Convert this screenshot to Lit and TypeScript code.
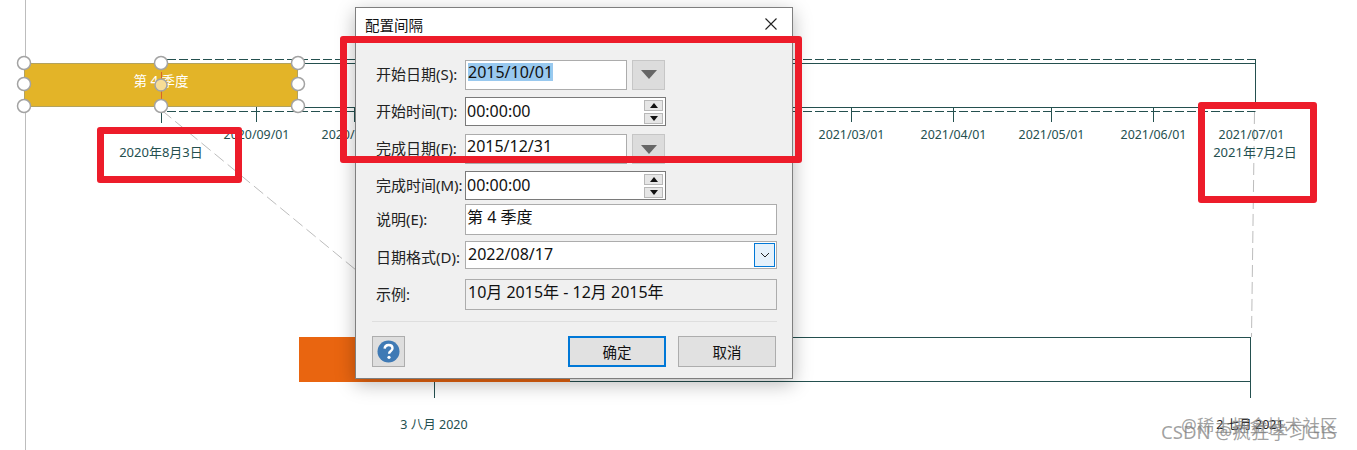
import { LitElement, html, css, svg } from "lit";
import { customElement } from "lit/decorators.js";

const TICKS: [number, string][] = [
  [256.5, "2020/09/01"],
  [354.5, "2020/10/01"],
  [851.5, "2021/03/01"],
  [953.5, "2021/04/01"],
  [1051.5, "2021/05/01"],
  [1153.5, "2021/06/01"],
  [1251.5, "2021/07/01"],
];
const DATES: [number, number, string][] = [
  [161, 144, "2020年8月3日"],
  [1255, 144, "2021年7月2日"],
];
const HANDLES: [number, number][] = [
  [24, 63], [161, 63], [298, 63],
  [24, 84], [298, 84],
  [24, 106], [161, 106], [298, 106],
];
const ANNS: [number, number, number, number][] = [
  [97, 127, 145, 56],
  [340, 36, 462, 127],
  [1198, 102, 119, 101],
];

const Down = () => html`<svg class="tri" viewBox="0 0 16 9"><path d="M0 0h16L8 9z" fill="#666"/></svg>`;
const Spin = () => html`<span class="spin">
  <span class="sb"><svg viewBox="0 0 8 5" width="8" height="5"><path d="M0 5h8L4 0z" fill="#111"/></svg></span>
  <span class="sb"><svg viewBox="0 0 8 5" width="8" height="5"><path d="M0 0h8L4 5z" fill="#111"/></svg></span>
</span>`;

@customElement("app-root")
export class AppRoot extends LitElement {
  static styles = css`
    :host { display: block; width: 1357px; height: 450px; position: relative; overflow: hidden; background: #fff; font-family: "Noto Sans", "Noto Sans CJK SC", sans-serif; }
    .canvas { position: absolute; inset: 0; }
    .layer { position: absolute; left: 0; top: 0; }
    .lab { position: absolute; font-size: 12.4px; line-height: 16px; color: #24504f; transform: translateX(-50%); white-space: nowrap; }
    .big { font-size: 13px; }
    .lab-mid { position: absolute; left: 434px; top: 417px; font-size: 12.5px; line-height: 16px; color: #24504f; transform: translateX(-50%); white-space: nowrap; }
    .lab-end { position: absolute; left: 1250px; top: 417px; font-size: 12.5px; line-height: 16px; color: #222; transform: translateX(-50%); white-space: nowrap; }
    .bar-y { position: absolute; left: 24px; top: 63px; width: 274px; height: 44px; box-sizing: border-box; background: #e3b428; border: 1px solid #b3a25e; color: #fff; font-size: 13.5px; display: flex; justify-content: center; padding-top: 7px; line-height: 20px; }
    .bar-o { position: absolute; left: 299px; top: 337px; width: 271px; height: 45px; background: #e96510; }
    .mark { position: absolute; font-size: 17.6px; line-height: 20px; color: rgba(125,125,125,.72); white-space: nowrap; }
    .m1 { left: 1181px; top: 415px; }
    .m2 { left: 1161px; top: 422px; font-size: 18.6px; }
    .ann { position: absolute; box-sizing: border-box; border: 7px solid #ed1c2a; border-radius: 3px; }

    .dlg { position: absolute; left: 355px; top: 7px; width: 438px; height: 372px; box-sizing: border-box; background: #f0f0f0; border: 1px solid #7f7f7f; box-shadow: 0 5px 18px rgba(0,0,0,.28); color: #111; display: flex; flex-direction: column; }
    .title { height: 34px; background: #fff; display: flex; align-items: center; justify-content: space-between; padding: 0 15px 2px 9px; box-sizing: border-box; font-size: 14.5px; flex: none; }
    .close { width: 12px; height: 12px; display: block; }
    .form { display: flex; flex-direction: column; padding: 17px 15px 0 20px; }
    .row { display: flex; align-items: center; }
    .r1 { height: 31px; }
    .r2 { height: 29px; margin-top: 7px; }
    .r3 { height: 32px; margin-top: 7px; }
    .r4 { height: 29px; margin-top: 6px; }
    .r5 { height: 31px; margin-top: 4px; }
    .r6 { height: 28px; margin-top: 6px; }
    .r7 { height: 31px; margin-top: 10px; }
    .label { width: 89px; flex: none; font-size: 15px; line-height: 20px; white-space: nowrap; color: #222; padding-bottom: 2px; }
    .low { padding-bottom: 0; padding-top: 4px; }
    .field { box-sizing: border-box; height: 100%; background: #fff; border: 1px solid #acacac; font-size: 16px; line-height: 20px; padding: 2px 1px; white-space: nowrap; display: flex; align-items: flex-start; }
    .date { width: 162px; height: 30px; padding-top: 0; }
    .end { padding-top: 1px; }
    .time { width: 201px; border-color: #7a7a7a; justify-content: space-between; padding: 3px 2px 2px 1px; }
    .wide { width: 312px; }
    .combo { width: 312px; padding: 2px 1px 1px 2px; justify-content: space-between; }
    .cbw { margin-top: -1px; }
    .ro { background: #f0f0f0; padding: 2px 2px; }
    .sel { background: #99c9ef; margin: 2px 0 0 1px; height: 18px; line-height: 18px; }
    .ddb { width: 33px; height: 30px; margin-left: 5px; box-sizing: border-box; background: #dcdcdc; border: 1px solid #c6c6c6; display: flex; align-items: center; justify-content: center; }
    .tri { width: 16px; height: 9px; display: block; }
    .spin { display: flex; flex-direction: column; gap: 2px; margin-top: -1px; }
    .sb { width: 19px; height: 11px; box-sizing: border-box; background: #e6e6e6; border: 1px solid #b8b8b8; display: flex; align-items: center; justify-content: center; }
    .cb { width: 21px; height: 24px; box-sizing: border-box; background: #e5f1fb; border: 1px solid #0078d7; display: flex; align-items: center; justify-content: center; }
    .sep { height: 1px; background: #dedede; margin: 11px 15px 0 16px; }
    .foot { display: flex; align-items: center; padding: 14px 16px 0 16px; }
    .btn { box-sizing: border-box; height: 31px; width: 98px; background: #e1e1e1; border: 1px solid #adadad; font-size: 14.5px; display: flex; align-items: center; justify-content: center; color: #111; }
    .help { width: 33px; margin-right: auto; background: #dedede; }
    .ok { border: 2px solid #0078d7; margin-right: 12px; }
  `;

  render() {
    return html`
      <div class="canvas">
        <div class="bar-o"></div>
        <svg class="layer" width="1357" height="450">
          <g fill="none" stroke-width="1">
            <path d="M25.5 0V450" stroke="#bdbdbd"/>
            <path d="M162 110.5L356 270M1254.5 112L1251.5 337" stroke="#bdbdbd" stroke-dasharray="12 5"/>
            <path d="M298 63.5H1255.5V107.5H298M1255.5 59V64M161.5 107V123M570 381.5H1250.5V337.5H792M1250.5 337V398M434.5 382V398" stroke="#24504f"/>
            <path d="M167 59.5H1255.5M167 111.5H1255.5" stroke="#24504f" stroke-dasharray="9 3"/>
            ${TICKS.slice(0, 6).map(([x]) => svg`<path d="M${x} 107V122" stroke="#24504f"/>`)}
          </g>
        </svg>
        <div class="bar-y">第 4 季度</div>
        ${TICKS.map(([x, t]) => html`<span class="lab" style="left:${x}px;top:127px">${t}</span>`)}
        ${DATES.map(([x, y, t]) => html`<span class="lab big" style="left:${x}px;top:${y}px">${t}</span>`)}
        <span class="lab-mid">3 八月 2020</span>
        <span class="lab-end">2 七月 2021</span>
        <svg class="layer" width="1357" height="450">
          <path d="M161.5 72V100" stroke="#d9622b"/>
          ${HANDLES.map(([x, y]) => svg`<circle cx=${x} cy=${y} r="6.5" fill="#fff" stroke="#a3a3a3" stroke-width="1.5"/>`)}
          <circle cx="161" cy="85" r="6" fill="#f7dd96" stroke="#a3a3a3" stroke-width="1.5"/>
        </svg>
        <span class="mark m1">@稀土掘金技术社区</span>
        <span class="mark m2">CSDN @疯狂学习GIS</span>
      </div>

      <div class="dlg">
        <div class="title">
          <span>配置间隔</span>
          <svg class="close" viewBox="0 0 12 12"><path d="M0.5 0.5L11.5 11.5M11.5 0.5L0.5 11.5" stroke="#222" stroke-width="1.1" fill="none"/></svg>
        </div>
        <div class="form">
          <div class="row r1"><span class="label">开始日期(S):</span><div class="field date"><span class="sel">2015/10/01</span></div><div class="ddb">${Down()}</div></div>
          <div class="row r2"><span class="label">开始时间(T):</span><div class="field time"><span>00:00:00</span>${Spin()}</div></div>
          <div class="row r3"><span class="label">完成日期(F):</span><div class="field date end">2015/12/31</div><div class="ddb">${Down()}</div></div>
          <div class="row r4"><span class="label">完成时间(M):</span><div class="field time"><span>00:00:00</span>${Spin()}</div></div>
          <div class="row r5"><span class="label">说明(E):</span><div class="field wide">第 4 季度</div></div>
          <div class="row r6"><span class="label low">日期格式(D):</span><div class="field combo"><span>2022/08/17</span>
            <span class="cb cbw"><svg width="10" height="6" viewBox="0 0 10 6"><path d="M1 1l4 4 4-4" fill="none" stroke="#222"/></svg></span></div></div>
          <div class="row r7"><span class="label">示例:</span><div class="field wide ro">10月 2015年 - 12月 2015年</div></div>
        </div>
        <div class="sep"></div>
        <div class="foot">
          <div class="btn help"><svg width="23" height="23" viewBox="0 0 23 23"><circle cx="11.5" cy="11.5" r="11" fill="#3f7ab5"/><path d="M7.6 8.6c.2-2.4 1.8-3.6 4-3.6 2.3 0 3.9 1.3 3.9 3.2 0 1.5-.8 2.3-1.9 3.1-1.1.8-1.5 1.3-1.5 2.5" fill="none" stroke="#fff" stroke-width="2.4"/><circle cx="12" cy="17.3" r="1.6" fill="#fff"/></svg></div>
          <div class="btn ok">确定</div>
          <div class="btn">取消</div>
        </div>
      </div>

      ${ANNS.map(([x, y, w, h]) => html`<div class="ann" style="left:${x}px;top:${y}px;width:${w}px;height:${h}px"></div>`)}
    `;
  }
}
